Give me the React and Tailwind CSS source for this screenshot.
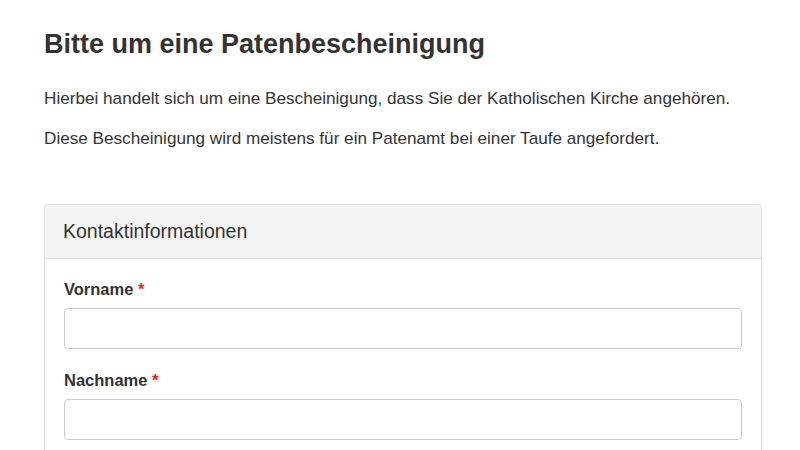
export default function App() {
  return (
    <div className="min-h-screen bg-white px-[44px] pt-[29px] font-['Liberation_Sans',Arial,sans-serif] text-[#333]">
      <h1 className="text-[27px] font-bold leading-[30px] mb-[29px]">Bitte um eine Patenbescheinigung</h1>
      <p className="text-[17.15px] leading-[20px] mb-[20px]">Hierbei handelt sich um eine Bescheinigung, dass Sie der Katholischen Kirche angehören.</p>
      <p className="text-[17.15px] leading-[20px] mb-[56px]">Diese Bescheinigung wird meistens für ein Patenamt bei einer Taufe angefordert.</p>
      <div className="w-[718px] rounded-[4px] border border-[#ddd]">
        <div className="h-[54px] flex items-center px-[18px] bg-[#f5f5f5] border-b border-[#ddd] rounded-t-[4px] text-[19.5px]">Kontaktinformationen</div>
        <div className="px-[19px] pt-[20px] pb-[20px]">
          <div className="mb-[21px]">
            <label className="block text-[16.5px] leading-[20px] font-bold mb-[9px]">Vorname <span className="text-[#e22]">*</span></label>
            <input className="block w-full h-[41px] rounded-[4px] border border-[#ccc] px-3 outline-none" />
          </div>
          <div>
            <label className="block text-[16.5px] leading-[20px] font-bold mb-[9px]">Nachname <span className="text-[#e22]">*</span></label>
            <input className="block w-full h-[41px] rounded-[4px] border border-[#ccc] px-3 outline-none" />
          </div>
        </div>
      </div>
    </div>
  );
}
